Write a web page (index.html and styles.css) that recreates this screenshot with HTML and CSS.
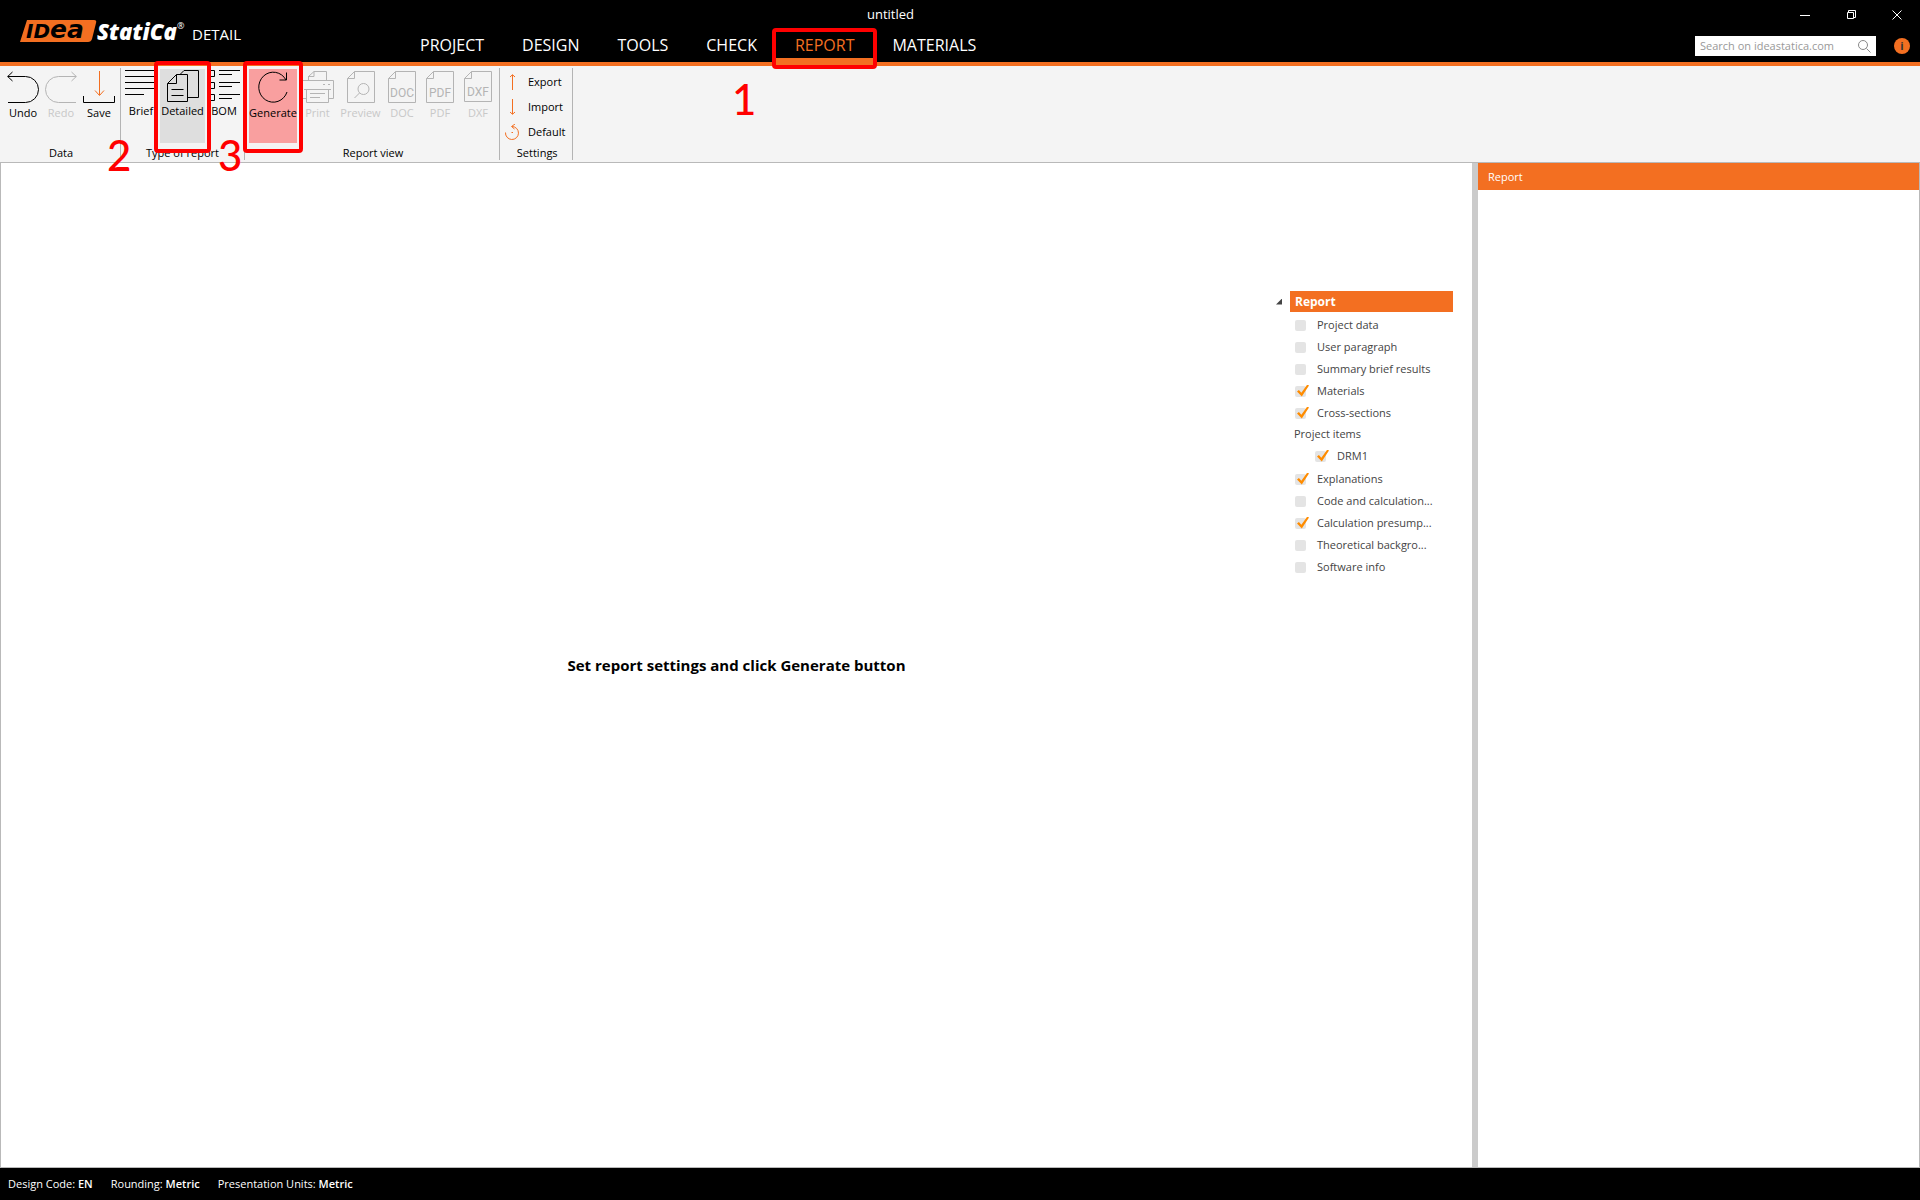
FILE: index.html
```
<!DOCTYPE html>
<html lang="en">
<head>
  <meta charset="UTF-8" />
  <meta name="viewport" content="width=device-width, initial-scale=1.0"/>
  <title>untitled - IDEA StatiCa Detail</title>
  <link rel="stylesheet" href="styles.css">
</head>
<body>
  <header class="header">
    <div class="brand">
      <svg class="logo" width="168" height="36" viewBox="0 0 168 36">
        <path d="M7 6H74Q77 6 76 9L72 25Q71 28 68 28H0Z" fill="#f36f21"/>
        <text class="logo-idea" x="6" y="24"><tspan class="logo-cap">ID</tspan><tspan class="logo-low">ea</tspan></text>
        <text class="logo-statica" x="77" y="26">StatiCa</text>
        <text class="logo-reg" x="157" y="15">®</text>
      </svg>
      <span class="module">DETAIL</span>
    </div>

    <div class="header-main">
      <div class="window-title">untitled</div>
      <nav class="tabs">
        <a href="#" class="tab">PROJECT</a>
        <a href="#" class="tab">DESIGN</a>
        <a href="#" class="tab">TOOLS</a>
        <a href="#" class="tab">CHECK</a>
        <a href="#" class="tab active">REPORT<span class="mark mark-tab"></span><span class="step step-1">1</span></a>
        <a href="#" class="tab">MATERIALS</a>
      </nav>
    </div>

    <div class="header-side">
      <div class="window-buttons">
        <button aria-label="Minimize"><svg width="10" height="10"><path d="M0 5.5H10"/></svg></button>
        <button aria-label="Restore"><svg width="10" height="10"><path d="M1.5 2.5H7.500V8.500H1.500ZM2.500 2V.5H9.500V7.500H8"/></svg></button>
        <button aria-label="Close"><svg width="10" height="10"><path d="M.5 .5L9.500 9.500M9.500 .5L.5 9.500"/></svg></button>
      </div>
      <div class="search-row">
        <form class="search">
          <input type="text" aria-label="Search" placeholder="Search on ideastatica.com" />
          <svg width="13" height="13" viewBox="0 0 13 13"><circle cx="5" cy="5" r="4.500"/><path d="M8.500 8.500L12.500 12.500"/></svg>
        </form>
        <button class="info" aria-label="Info">i</button>
      </div>
    </div>
  </header>

  <div class="ribbon">
    <section class="group data-group">
      <div class="tools">
        <button class="tool">
          <svg class="icon" viewBox="0 0 32 32"><path d="M5.500 1L.7 5.500L5.500 10M.7 5.500H18.500A12.500 12.500 0 0 1 18.500 31.500H1"/></svg>
          Undo
        </button>
        <button class="tool" disabled>
          <svg class="icon" viewBox="0 0 32 32"><path d="M26.500 1L31.300 5.500L26.500 10M31.300 5.500H13.500A12.500 12.500 0 0 0 13.500 31.500H31"/></svg>
          Redo
        </button>
        <button class="tool">
          <svg class="icon" viewBox="0 0 32 32"><path class="accent" d="M16.500 0V24M12 19.500L16.500 24.500L21 19.500"/><path d="M.5 25V31.500H31.500V25"/></svg>
          Save
        </button>
      </div>
      <h3>Data</h3>
    </section>

    <section class="group type-group">
      <div class="tools">
        <button class="tool">
          <svg class="icon" viewBox="0 0 32 32"><path d="M0 .5H32M0 6.500H32M0 12.500H32M0 18.500H32M0 24.500H19"/></svg>
          Brief
        </button>
        <button class="tool selected">
          <svg class="icon" viewBox="0 0 32 32"><path d="M9.500 4.500H20.500V31.500H.5V13.500ZM9.500 4.500V13.500H.5M4.500 19.500H16.500M4.500 25.500H16.500M13.500 4L17 .5H31.500V27.500H21"/></svg>
          Detailed
          <span class="mark"></span>
          <span class="step step-2">2</span>
        </button>
        <button class="tool">
          <svg class="icon" viewBox="0 0 32 32"><path d="M.5 .5H6.500V6.500H.5ZM.5 12.500H6.500V18.500H.5ZM.5 24.500H6.500V30.500H.5ZM11 .5H32M11 4.500H24M11 12.500H32M11 16.500H24M11 24.500H32M11 28.500H24"/></svg>
          BOM
        </button>
      </div>
      <h3>Type of report</h3>
    </section>

    <section class="group view-group">
      <div class="tools">
        <button class="tool generate">
          <svg class="icon" viewBox="0 0 32 32"><path d="M29 9A14.500 15 0 1 0 30 21M29.500 1.500V9H22.500"/></svg>
          Generate
          <span class="mark"></span>
          <span class="step step-3">3</span>
        </button>
        <button class="tool print" disabled>
          <svg class="icon" viewBox="0 0 32 32"><path d="M6.500 9.500V5.500L12 .5H24.500V9.500M6 5.500H12V.5M4 27.500H.5V9.500H31.500V27.500H27M2 18.500H29M4.500 18.500V31.500H26.500V18.500M8 22.500H23M8 26.500H18M21 13.500H23M26 13.500H28"/></svg>
          Print
        </button>
        <button class="tool preview" disabled>
          <svg class="icon" viewBox="0 0 32 32"><path d="M9.500 .5H29.500V31.500H2.500V7.500ZM9.500 .5V7.500H2.500"/><circle cx="18.500" cy="18" r="5.500"/><path d="M14.500 22L9.500 27"/></svg>
          Preview
        </button>
        <button class="tool" disabled>
          <svg class="icon" viewBox="0 0 32 32"><path d="M9.500 .5H29.500V31.500H2.500V7.500ZM9.500 .5V7.500H2.500"/><text x="16" y="26">DOC</text></svg>
          DOC
        </button>
        <button class="tool" disabled>
          <svg class="icon" viewBox="0 0 32 32"><path d="M9.500 .5H29.500V31.500H2.500V7.500ZM9.500 .5V7.500H2.500"/><text x="16" y="26">PDF</text></svg>
          PDF
        </button>
        <button class="tool" disabled>
          <svg class="icon" viewBox="0 0 32 32"><path d="M9.500 .5H29.500V30.500H2.500V7.500ZM9.500 .5V7.500H2.500"/><text x="16" y="25">DXF</text></svg>
          DXF
        </button>
      </div>
      <h3>Report view</h3>
    </section>

    <section class="group settings-group">
      <div class="settings">
        <button class="setting">
          <svg width="16" height="16" viewBox="0 0 16 16"><path d="M8.500 16V1M6 3L8.500 .7L11 3"/></svg>
          Export
        </button>
        <button class="setting">
          <svg width="16" height="16" viewBox="0 0 16 16"><path d="M8.500 0V15M6 13L8.500 15.300L11 13"/></svg>
          Import
        </button>
        <button class="setting">
          <svg width="16" height="16" viewBox="0 0 16 16"><path d="M1.500 8.500A6.500 6.500 0 1 0 8 2.500M11 0L7.500 2.500L10.500 5M7.500 8.500H9"/></svg>
          Default
        </button>
      </div>
      <h3>Settings</h3>
    </section>
  </div>

  <main class="workspace">
    <div class="report-view">
      <p class="message">Set report settings and click Generate button</p>
      <div class="tree">
        <div class="tree-root"><span class="arrow"></span><span class="tree-title">Report</span></div>
        <label class="item"><input type="checkbox" /><span>Project data</span></label>
        <label class="item"><input type="checkbox" /><span>User paragraph</span></label>
        <label class="item"><input type="checkbox" /><span>Summary brief results</span></label>
        <label class="item"><input type="checkbox" checked /><span>Materials</span></label>
        <label class="item"><input type="checkbox" checked /><span>Cross-sections</span></label>
        <div class="item-group">Project items</div>
        <label class="item nested"><input type="checkbox" checked /><span>DRM1</span></label>
        <label class="item"><input type="checkbox" checked /><span>Explanations</span></label>
        <label class="item"><input type="checkbox" /><span>Code and calculation...</span></label>
        <label class="item"><input type="checkbox" checked /><span>Calculation presump...</span></label>
        <label class="item"><input type="checkbox" /><span>Theoretical backgro...</span></label>
        <label class="item"><input type="checkbox" /><span>Software info</span></label>
      </div>
    </div>
    <aside class="side-panel">
      <h2>Report</h2>
    </aside>
  </main>

  <footer class="status">
    <span>Design Code: <b>EN</b></span>
    <span>Rounding: <b>Metric</b></span>
    <span>Presentation Units: <b>Metric</b></span>
  </footer>
</body>
</html>
```
FILE: styles.css
```
* {
  box-sizing: border-box;
}

body {
  margin: 0;
  min-height: 100vh;
  display: flex;
  flex-direction: column;
  font-family: "Open Sans", "Noto Sans", sans-serif;
  font-size: 11px;
  line-height: 16px;
  color: #000;
  background: #fff;
}

button {
  padding: 0;
  border: none;
  background: none;
  font: inherit;
  color: inherit;
}

svg {
  fill: none;
  stroke: currentColor;
  flex: none;
}

h2, h3, p {
  margin: 0;
  font-weight: normal;
}

h3 {
  font-size: 11px;
  line-height: 14px;
  text-align: center;
}

/* header */
.header {
  display: flex;
  height: 66px;
  background: #000;
  border-bottom: 4px solid #f36f21;
  color: #fff;
}

.brand {
  flex: 0 0 401px;
  display: flex;
  align-items: flex-start;
  gap: 4px;
  padding: 14px 0 0 20px;
}

.logo {
  overflow: visible;
}

.logo path,
.logo text {
  stroke: none;
}

.logo-idea {
  font-family: "DejaVu Sans", sans-serif;
  font-weight: bold;
  font-style: italic;
  fill: #000;
}

.logo-cap {
  font-size: 20px;
}

.logo-low {
  font-size: 25px;
}

.logo-statica {
  font-family: "Open Sans", sans-serif;
  font-size: 22px;
  font-weight: 800;
  font-style: italic;
  fill: #fff;
}

.logo-reg {
  font-size: 9px;
  fill: #fff;
}

.module {
  font-size: 15px;
  line-height: 40px;
}

.header-main {
  flex: 1;
  display: flex;
  flex-direction: column;
}

.window-title {
  height: 28px;
  font-size: 13px;
  line-height: 28px;
  text-align: center;
}

.tabs {
  display: flex;
}

.tab {
  position: relative;
  padding: 5px 19px 0;
  font-size: 16px;
  line-height: 25px;
  color: #fff;
  text-decoration: none;
  border-bottom: 4px solid transparent;
}

.tab.active {
  color: #f36f21;
  border-color: #f36f21;
}

.header-side {
  flex: 0 0 540px;
  display: flex;
  flex-direction: column;
  align-items: flex-end;
}

.window-buttons {
  display: flex;
  gap: 36px;
  height: 30px;
  padding-right: 18px;
  align-items: center;
}

.window-buttons button,
.window-buttons svg {
  display: block;
}

.search-row {
  display: flex;
  align-items: center;
  gap: 18px;
  padding: 6px 10px 0 0;
}

.search {
  display: flex;
  align-items: center;
  width: 181px;
  height: 20px;
  padding: 0 5px;
  background: #fff;
  color: #888;
}

.search input {
  flex: 1;
  min-width: 0;
  padding: 0;
  border: none;
  outline: none;
  font: inherit;
}

.search input::placeholder {
  color: #999;
}

.info {
  width: 16px;
  height: 16px;
  border-radius: 50%;
  background: #f36f21;
  color: #333;
  font-weight: bold;
  line-height: 16px;
}

/* ribbon */
.ribbon {
  display: flex;
  height: 97px;
  padding: 2px 0;
  background: #f4f4f4;
  border-bottom: 1px solid #b9b9b9;
}

.group {
  display: flex;
  flex-direction: column;
  justify-content: space-between;
  padding: 1px 2px 0 4px;
  border-right: 1px solid #b4b4b4;
}

.tools {
  display: flex;
}

.tool {
  position: relative;
  display: flex;
  flex-direction: column;
  align-items: center;
  gap: 2px;
  width: 38px;
  height: 74px;
  padding-top: 2px;
  white-space: nowrap;
}

.tool:disabled {
  color: #c8c8c8;
}

.icon {
  width: 32px;
  height: 32px;
}

.tool:disabled .icon {
  color: #b4b4b4;
}

.icon text {
  font-family: "Roboto", sans-serif;
  font-size: 12px;
  text-anchor: middle;
  fill: currentColor;
  stroke: none;
}

.accent {
  stroke: #f36f21;
}

.type-group {
  padding: 1px 1px 0;
}

.type-group .tool {
  gap: 1px;
  padding-top: 1px;
}

.type-group .selected {
  width: 45px;
  background: #dedede;
}

.view-group .generate {
  width: 48px;
  background: #f99f9f;
}

.view-group .print {
  width: 41px;
}

.view-group .preview {
  width: 45px;
}

.settings-group {
  padding-top: 6px;
}

.settings {
  display: flex;
  flex-direction: column;
  gap: 9px;
}

.setting {
  display: flex;
  gap: 8px;
  padding: 0 5px 0 0;
}

.setting svg {
  color: #f36f21;
}

/* step annotations */
.mark {
  position: absolute;
  inset: -8px -6px -10px;
  border: 4px solid #f00;
  border-radius: 4px;
  z-index: 1;
}

.mark-tab {
  inset: 0 -4px -11px;
}

/* the active tab runs into the header's bottom border */
.tab.active::after {
  content: "";
  position: absolute;
  inset: auto 0 -8px;
  height: 8px;
  background: #f36f21;
}

.step {
  position: absolute;
  font-family: "Lato", sans-serif;
  font-size: 42px;
  font-weight: 500;
  line-height: 42px;
  color: #f00;
  z-index: 2;
}

.step-1 {
  left: -44px;
  top: 50px;
}

.step-2 {
  left: -53px;
  top: 65px;
}

.step-3 {
  left: -31px;
  top: 65px;
}

/* workspace */
.workspace {
  flex: 1;
  display: flex;
  border: solid #b9b9b9;
  border-width: 0 1px 1px;
}

.report-view {
  flex: 1;
  display: grid;
  border-right: 6px solid #cbcbcb;
}

.message,
.tree {
  grid-area: 1 / 1;
}

.message {
  place-self: center;
  font-size: 15px;
  font-weight: bold;
}

.tree {
  justify-self: end;
  align-self: start;
  width: 177px;
  margin: 128px 19px 0 0;
  color: #444;
}

.tree-root {
  display: flex;
  align-items: center;
  gap: 8px;
  margin-bottom: 2px;
}

.arrow {
  width: 6px;
  height: 6px;
  background: #444;
  clip-path: polygon(100% 0, 100% 100%, 0 100%);
}

.tree-title {
  flex: 1;
  padding-left: 5px;
  background: #f36f21;
  color: #fff;
  font-size: 12px;
  font-weight: bold;
  line-height: 21px;
}

.item {
  display: flex;
  align-items: center;
  gap: 11px;
  height: 22px;
  padding-left: 19px;
}

.item.nested {
  height: 24px;
  padding-left: 39px;
}

.item-group {
  padding-left: 18px;
  line-height: 20px;
}

.item input {
  appearance: none;
  position: relative;
  width: 11px;
  height: 11px;
  margin: 0;
  border-radius: 2px;
  background: #e4e4e4;
}

.item input:checked::after {
  content: "";
  position: absolute;
  left: 2px;
  top: -1px;
  width: 12px;
  height: 12px;
  background: #ff8c00;
  clip-path: polygon(0 58%, 16% 46%, 36% 68%, 86% 0, 100% 8%, 40% 100%);
}

.side-panel {
  flex: 0 0 441px;
}

.side-panel h2 {
  padding-left: 10px;
  background: #f36f21;
  color: #fff;
  font-size: 11px;
  line-height: 27px;
}

/* status bar */
.status {
  display: flex;
  gap: 18px;
  height: 32px;
  padding-left: 8px;
  background: #000;
  color: #fff;
  line-height: 32px;
}

.status b {
  font-weight: 600;
}
```
